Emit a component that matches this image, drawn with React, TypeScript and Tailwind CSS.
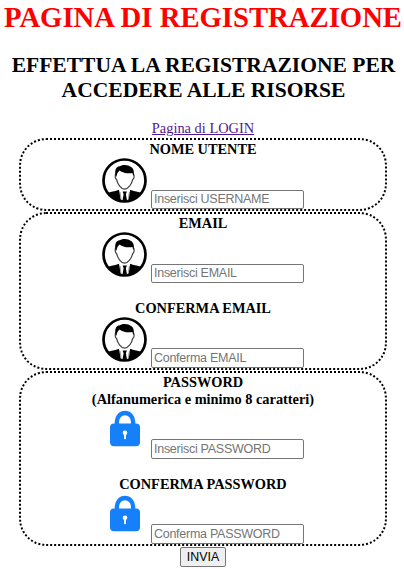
import React from "react";

function UserIcon() {
  return (
    <svg viewBox="0 0 45 45" className="h-[45px] w-[45px] shrink-0">
      <defs>
        <clipPath id="avatar">
          <circle cx="22.5" cy="22.5" r="21" />
        </clipPath>
      </defs>
      <circle cx="22.5" cy="22.5" r="21" fill="#fff" />
      <g clipPath="url(#avatar)">
        <path d="M3 45V36.5C7 33.8 12 33.8 17.2 31.8L22.5 44L28 31.8C33 33.8 38 33.8 42 36.5V45Z" fill="#000" />
        <path d="M17 31.5L18.5 41L22.5 45L26.8 41L28.2 31.5L22.7 33.5Z" fill="#fff" />
        <path d="M18 34L19 41.5L21 43.5M27.4 34L26.2 41.5L24.4 43.5" fill="none" stroke="#555" strokeWidth="0.6" />
        <path d="M20.6 33.5H24.9L23.9 36.2L24.9 42L22.7 44.5L20.6 42L21.6 36.2Z" fill="#000" />
      </g>
      <path
        d="M14.2 15.5C12.6 16.5 12.9 20.8 14.6 21.5C15.6 26 18.6 31 22.5 31.2C26.6 31 29.7 26 30.7 21.5C32.4 20.8 32.7 16.5 31.1 15.5"
        fill="#fff"
        stroke="#444"
        strokeWidth="1.2"
      />
      <path
        d="M13.7 18.5C12.4 12.5 13.7 8.6 17.8 8.2C21 6.2 26.5 6.6 29 9C32.3 11 32.3 15 31.4 18.5L30.4 14.9C25.5 15.8 20.5 14.9 17.6 12.4C15.8 13.7 14.8 15.9 14.5 18.5Z"
        fill="#000"
      />
      <circle cx="22.5" cy="22.5" r="21" fill="none" stroke="#000" strokeWidth="2.7" />
    </svg>
  );
}

function LockIcon() {
  return (
    <svg viewBox="0 0 45 45" className="h-[45px] w-[45px] shrink-0">
      <path d="M14.9 20V13.6A8.1 8.6 0 0 1 31.1 13.6V20" fill="none" stroke="#1680fa" strokeWidth="4.4" />
      <rect x="8" y="15.6" width="30" height="22.6" rx="4" fill="#1680fa" />
      <circle cx="23" cy="24.8" r="2.3" fill="#fff" />
      <rect x="22.1" y="26" width="1.9" height="5.3" rx="0.8" fill="#fff" />
    </svg>
  );
}

type FieldProps = {
  icon: React.ReactNode;
  placeholder: string;
  inputClass: string;
};

function Field({ icon, placeholder, inputClass }: FieldProps) {
  return (
    <div className="ml-[81px] flex h-[51px] items-start gap-1">
      {icon}
      <input
        placeholder={placeholder}
        className={
          "w-[153px] shrink-0 rounded-[2px] border border-[#767676] bg-white px-[2px] font-['Liberation_Sans',Arial,sans-serif] text-[12.5px] leading-[15px] tracking-[-0.27px] placeholder:text-[#757575] placeholder:opacity-100 " +
          inputClass
        }
      />
    </div>
  );
}

const label = "pt-px text-center text-[14.35px] font-bold leading-[17px] whitespace-nowrap";
const box = "ml-[19px] w-[368px] rounded-[27px] border-2 border-dotted border-black";

export default function App() {
  return (
    <main className="h-[569px] w-[404px] overflow-hidden bg-white font-['Liberation_Serif','Times_New_Roman',serif] text-black">
      <h1 className="h-[50px] whitespace-nowrap pl-[2px] pt-[1px] text-center text-[28.7px] font-bold leading-8 text-[#ff0000]">
        PAGINA DI REGISTRAZIONE
      </h1>
      <h2 className="h-[70px] pl-[3px] pt-[3px] text-center text-[21.55px] font-bold leading-[25px]">
        EFFETTUA LA REGISTRAZIONE PER
        <br />
        ACCEDERE ALLE RISORSE
      </h2>
      <div className="h-[18px] pl-[2px] text-center text-[14.4px] leading-[17px]">
        <a className="text-[#551a8b] underline">Pagina di LOGIN</a>
      </div>
      <form>
        <section className={box + " h-[73px]"}>
          <div className={label + " h-[18px]"}>NOME UTENTE</div>
          <Field icon={<UserIcon />} placeholder="Inserisci USERNAME" inputClass="mt-8 h-[19px] pb-[2px]" />
        </section>
        <section className={box + " mt-px h-[158px]"}>
          <div className={label + " h-[18px]"}>EMAIL</div>
          <Field icon={<UserIcon />} placeholder="Inserisci EMAIL" inputClass="mt-8 h-[19px] pb-[2px]" />
          <div className={label + " mt-[16px] h-[18px]"}>CONFERMA EMAIL</div>
          <Field icon={<UserIcon />} placeholder="Conferma EMAIL" inputClass="mt-[31px] h-[20px]" />
        </section>
        <section className={box + " mt-px h-[175px]"}>
          <div className={label + " h-[35px]"}>
            PASSWORD
            <br />
            (Alfanumerica e minimo 8 caratteri)
          </div>
          <Field icon={<LockIcon />} placeholder="Inserisci PASSWORD" inputClass="mt-[31px] h-[20px]" />
          <div className={label + " mt-[16px] h-[18px]"}>CONFERMA PASSWORD</div>
          <Field icon={<LockIcon />} placeholder="Conferma PASSWORD" inputClass="mt-[31px] h-[20px]" />
        </section>
        <button
          type="button"
          className="ml-[180px] mt-px block h-5 w-[46px] rounded-[2px] border border-[#767676] bg-[#efefef] text-center font-['Liberation_Sans',Arial,sans-serif] text-[12.4px] leading-[18px]"
        >
          INVIA
        </button>
      </form>
    </main>
  );
}
